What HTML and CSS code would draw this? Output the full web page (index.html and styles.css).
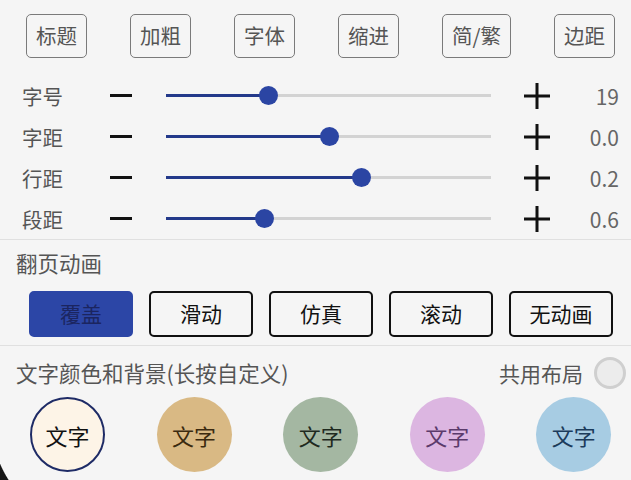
FILE: index.html
```html
<!DOCTYPE html>
<html lang="zh">
<head>
<meta charset="utf-8">
<link rel="stylesheet" href="styles.css">
</head>
<body>
<div class="screen">
  <div class="toolbar">
    <div class="tool">标题</div>
    <div class="tool">加粗</div>
    <div class="tool">字体</div>
    <div class="tool">缩进</div>
    <div class="tool">简/繁</div>
    <div class="tool">边距</div>
  </div>

  <div class="sliders">
    <div class="srow">
      <span class="slabel">字号</span>
      <span class="minus"></span>
      <div class="track"><div class="fill" style="width:31.4%"><span class="thumb"></span></div></div>
      <svg class="plus" viewBox="0 0 26 26"><path d="M0 13H26M13 0V26" stroke="#111" stroke-width="3"/></svg>
      <span class="sval">19</span>
    </div>
    <div class="srow">
      <span class="slabel">字距</span>
      <span class="minus"></span>
      <div class="track"><div class="fill" style="width:50.2%"><span class="thumb"></span></div></div>
      <svg class="plus" viewBox="0 0 26 26"><path d="M0 13H26M13 0V26" stroke="#111" stroke-width="3"/></svg>
      <span class="sval">0.0</span>
    </div>
    <div class="srow">
      <span class="slabel">行距</span>
      <span class="minus"></span>
      <div class="track"><div class="fill" style="width:60%"><span class="thumb"></span></div></div>
      <svg class="plus" viewBox="0 0 26 26"><path d="M0 13H26M13 0V26" stroke="#111" stroke-width="3"/></svg>
      <span class="sval">0.2</span>
    </div>
    <div class="srow">
      <span class="slabel">段距</span>
      <span class="minus"></span>
      <div class="track"><div class="fill" style="width:30.2%"><span class="thumb"></span></div></div>
      <svg class="plus" viewBox="0 0 26 26"><path d="M0 13H26M13 0V26" stroke="#111" stroke-width="3"/></svg>
      <span class="sval">0.6</span>
    </div>
  </div>

  <div class="divider"></div>

  <div class="section-title">翻页动画</div>
  <div class="anims">
    <div class="anim active">覆盖</div>
    <div class="anim">滑动</div>
    <div class="anim">仿真</div>
    <div class="anim">滚动</div>
    <div class="anim">无动画</div>
  </div>

  <div class="divider second"></div>

  <div class="color-head">
    <span class="section-title inline">文字颜色和背景(长按自定义)</span>
    <span class="share">共用布局<span class="radio"></span></span>
  </div>

  <div class="swatches">
    <div class="swatch s1">文字</div>
    <div class="swatch s2">文字</div>
    <div class="swatch s3">文字</div>
    <div class="swatch s4">文字</div>
    <div class="swatch s5">文字</div>
  </div>

  <div class="corner"></div>
</div>
</body>
</html>
```

FILE: styles.css
```css
html, body {
  margin: 0;
  padding: 0;
}
body {
  background: #f5f5f5;
  font-family: "Noto Sans CJK SC", "Noto Sans", sans-serif;
}
.screen {
  position: relative;
  width: 631px;
  height: 480px;
  overflow: hidden;
}

/* toolbar */
.toolbar {
  display: flex;
  justify-content: space-between;
  padding: 14px 16px 0 26px;
}
.tool {
  box-sizing: border-box;
  height: 44px;
  padding: 0 9px;
  border: 1.5px solid #7a7a7a;
  border-radius: 5px;
  font-size: 20.5px;
  line-height: 41px;
  color: #555;
}

/* sliders */
.sliders {
  margin-top: 17px;
}
.srow {
  display: grid;
  grid-template-columns: 88px 22px 359px 33px 26px 1fr;
  align-items: center;
  height: 41px;
  padding: 0 12px 0 22px;
}
.slabel {
  font-size: 20.5px;
  color: #555;
  line-height: 28px;
}
.minus {
  height: 3px;
  background: #111;
}
.track {
  position: relative;
  height: 3px;
  background: #d3d3d3;
  margin-left: 34px;
}
.plus {
  grid-column: 5;
  width: 26px;
  height: 26px;
  display: block;
}
.fill {
  position: relative;
  height: 3px;
  background: #23398a;
}
.thumb {
  position: absolute;
  right: -9.5px;
  top: -8px;
  width: 19px;
  height: 19px;
  border-radius: 50%;
  background: #2b45a3;
}
.sval {
  text-align: right;
  font-size: 21px;
  color: #666;
  line-height: 28px;
}

.divider {
  height: 1px;
  background: #e0e0e0;
}

.section-title {
  font-size: 21.5px;
  line-height: 28px;
  color: #555;
  padding-left: 16px;
  margin-top: 9px;
}

/* page animation */
.anims {
  display: flex;
  gap: 16px;
  padding-left: 29px;
  margin-top: 14px;
}
.anim {
  box-sizing: border-box;
  width: 104px;
  height: 46px;
  border: 2.5px solid #111;
  border-radius: 5px;
  text-align: center;
  font-size: 21px;
  line-height: 40px;
  color: #111;
}
.anim.active {
  background: #2c46a6;
  border-color: #2c46a6;
  color: #1b2560;
}
.divider.second {
  margin-top: 8px;
}

/* colours */
.color-head {
  display: flex;
  justify-content: space-between;
  align-items: center;
  margin-top: 11px;
  padding-right: 5px;
}
.section-title.inline {
  margin-top: 0;
}
.share {
  display: flex;
  align-items: center;
  gap: 11px;
  font-size: 21px;
  line-height: 28px;
  color: #555;
}
.radio {
  box-sizing: border-box;
  width: 32px;
  height: 32px;
  border-radius: 50%;
  border: 3px solid #cfcfcf;
  background: #ececec;
}

.swatches {
  display: flex;
  gap: 51.6px;
  padding-left: 30px;
  margin-top: 8px;
}
.swatch {
  box-sizing: border-box;
  width: 75px;
  height: 75px;
  border-radius: 50%;
  display: flex;
  align-items: center;
  justify-content: center;
  font-size: 22px;
}
.s1 { background: #fdf4e7; border: 2px solid #1e2b66; color: #111; }
.s2 { background: #d9b984; color: #3b2a10; }
.s3 { background: #a4b7a2; color: #1f2a1f; }
.s4 { background: #dcb6e1; color: #5b3b6b; }
.s5 { background: #a7cce3; color: #1b3b5b; }

/* device rounded corner overlay */
.corner {
  position: absolute;
  left: 0;
  bottom: 0;
  width: 24px;
  height: 25px;
  background: radial-gradient(circle 108.5px at 100px -33.5px, transparent 108px, #151515 109px);
}
```
